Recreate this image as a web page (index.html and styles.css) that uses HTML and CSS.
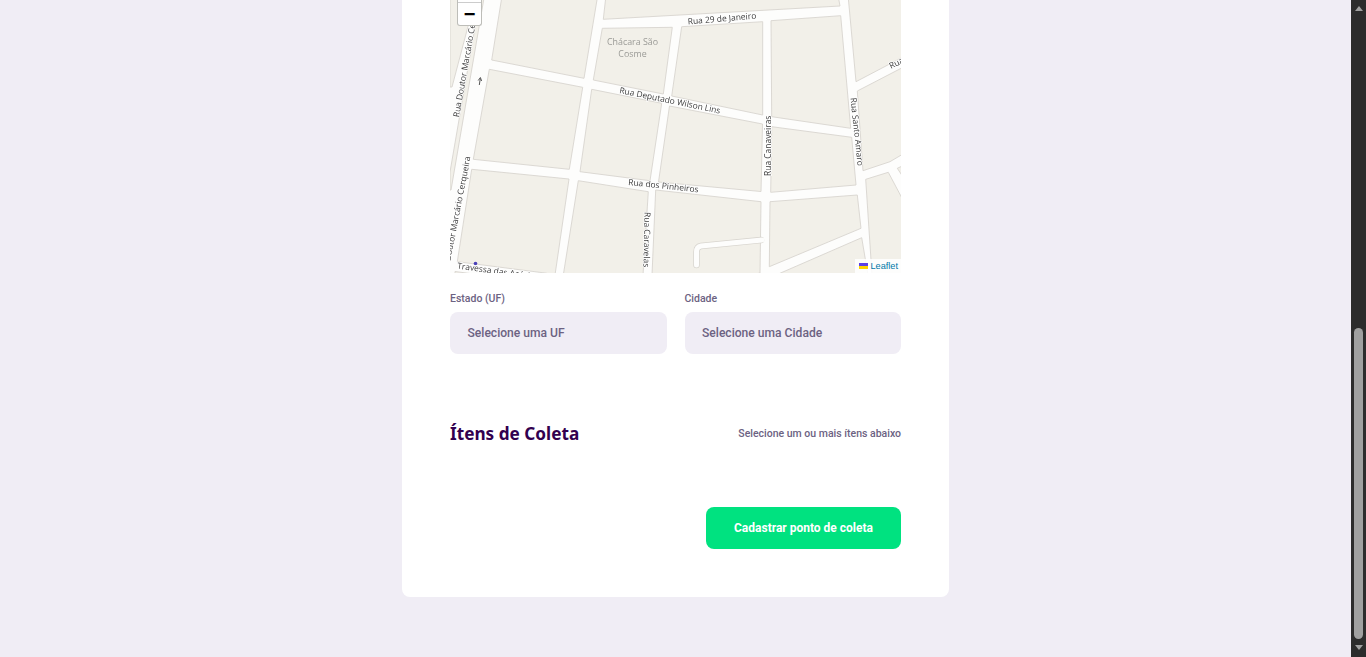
FILE: index.html
```html
<!DOCTYPE html>
<html lang="pt-BR">
<head>
<meta charset="utf-8">
<title>Cadastro do ponto de coleta</title>
<link rel="stylesheet" href="styles.css">
</head>
<body>
<div class="app">
  <main class="page">
    <form class="card">
      <div class="map">
        <svg class="map-canvas" viewBox="450 0 451 273" width="451" height="273">
          <g class="tiles">
            <polygon class="block" points="450,-2 475.5,-2 452,87 450,87"/>
            <polygon class="block" points="480,-2 484,-2 451,190 450,190 450,172"/>
            <polygon class="block" points="501.7,-2 491.7,60 584,78.3 597.3,-2"/>
            <polygon class="block" points="605.7,-2 603.3,19.3 840,6 838.5,-2"/>
            <polygon class="block" points="602.3,28.3 672.3,27.3 663.3,94 593.3,80"/>
            <polygon class="block" points="681.7,26.7 762.7,21.7 762.7,115 671.7,96"/>
            <polygon class="block" points="771,20.7 840.7,15.7 850.7,128.3 771.7,116.7"/>
            <polygon class="block" points="848.3,-2 856,81.7 903,57 903,-2"/>
            <polygon class="block" points="857.3,91 903,67.3 903,154 890,161.7 863,170.7"/>
            <polygon class="block" points="489.3,69.3 582.7,87.3 569.3,169.3 473.3,159.3"/>
            <polygon class="block" points="591.7,89.3 661.7,103.3 650,180.7 580,171.7"/>
            <polygon class="block" points="669.5,106 762.5,124 761,191.5 658.5,182"/>
            <polygon class="block" points="771.7,126.7 851.7,137.3 856,185 770.7,192.3"/>
            <polygon class="block" points="471.7,169.3 569,179 555,275 545,273 457.3,261.7"/>
            <polygon class="block" points="455,271.5 470,273.5 455,276"/>
            <polygon class="block" points="578.3,180.7 648.3,191.7 643,275 563.3,275"/>
            <polygon class="block" points="655.7,190 761,201.7 760,273 752,275 652,275"/>
            <polygon class="block" points="770,201.7 857.3,195 861,228.3 769.3,266.7"/>
            <polygon class="block" points="861.7,237.7 868,275 776,275"/>
            <polygon class="block" points="865.7,179.3 888.3,172.3 903,200 903,275 872,275"/>
            <polygon class="block" points="897.3,168.3 903,165.7 903,177"/>
            <path class="lane" d="M761,240 L701,246 Q696.5,246.8 696.5,252 L696.5,265"/>
            <path class="lane-fill" d="M762,240 L701,246 Q696.5,246.8 696.5,252 L696.5,265"/>
            <path class="oneway" d="M479.3,85 L480.3,78.5 M478.2,80.5 L480.4,77.5 L481.6,81"/>
            <circle class="poi" cx="475.5" cy="263.5" r="1.8"/>
            <text class="label poi-label" x="632.5" y="45" text-anchor="middle">Chácara São</text>
            <text class="label poi-label" x="632.5" y="57" text-anchor="middle">Cosme</text>
            <text class="label" transform="translate(688 24.5) rotate(-5)">Rua 29 de Janeiro</text>
            <text class="label" transform="translate(619 93) rotate(11.5)">Rua Deputado Wilson Lins</text>
            <text class="label" transform="translate(459 117.5) rotate(-80)">Rua Doutor Marcário Ce</text>
            <text class="label" text-anchor="end" transform="translate(470.5 157) rotate(-79)">Rua Doutor Marcário Cerqueira</text>
            <text class="label" transform="translate(457 268.5) rotate(8)">Travessa das Acácias</text>
            <text class="label" transform="translate(628 185) rotate(6)">Rua dos Pinheiros</text>
            <text class="label" transform="translate(644.5 212) rotate(91)">Rua Caravelas</text>
            <text class="label" transform="translate(771 176) rotate(-90)">Rua Canaveiras</text>
            <text class="label" transform="translate(850.5 98) rotate(84)">Rua Santo Amaro</text>
            <text class="label" transform="translate(891 69) rotate(-27)">Rua</text>
          </g>
        </svg>
        <div class="zoom">
          <span class="zoom-plus"></span>
          <span class="zoom-minus">−</span>
        </div>
        <div class="credit">
          <svg class="flag" viewBox="0 0 12 8" width="9" height="6"><rect width="12" height="4" fill="#5b40e8"/><rect y="4" width="12" height="4" fill="#ffd500"/></svg>
          <span class="credit-link">Leaflet</span>
        </div>
      </div>

      <div class="fields">
        <div class="field">
          <label class="field-label">Estado (UF)</label>
          <div class="select">Selecione uma UF</div>
        </div>
        <div class="field">
          <label class="field-label">Cidade</label>
          <div class="select">Selecione uma Cidade</div>
        </div>
      </div>

      <div class="legend">
        <h2 class="legend-title">Ítens de Coleta</h2>
        <span class="legend-hint">Selecione um ou mais ítens abaixo</span>
      </div>

      <div class="actions">
        <button class="submit" type="button">Cadastrar ponto de coleta</button>
      </div>
    </form>
  </main>
  <aside class="scrollbar">
    <span class="arrow arrow-up"></span>
    <span class="thumb"></span>
    <span class="arrow arrow-down"></span>
  </aside>
</div>
</body>
</html>
```
FILE: styles.css
```css
* { box-sizing: border-box; }
html, body { margin: 0; height: 100%; overflow: hidden; }
body { background: #f0edf5; font-family: Roboto, "Liberation Sans", sans-serif; color: #6c6282; }
.app { display: flex; height: 657px; }
.page { flex: 1; display: flex; justify-content: center; align-items: flex-start; min-width: 0; }
.card { width: 547px; height: 597px; padding: 0 48px; background: #fff; border-radius: 0 0 8px 8px; }

.map { position: relative; height: 273px; overflow: hidden; background: #fdfdfc; }
.map-canvas { display: block; }
.tiles { filter: blur(0.45px); }
.block { fill: #f2f0e9; stroke: #d8d5cf; stroke-width: 0.9; }
.lane { fill: none; stroke: #d8d5cf; stroke-width: 6.5; stroke-linecap: round; }
.lane-fill { fill: none; stroke: #fdfdfc; stroke-width: 5; stroke-linecap: round; }
.oneway { fill: none; stroke: #555; stroke-width: 1; }
.poi { fill: #4a40b8; }
.label { font-family: "Open Sans", "Noto Sans", sans-serif; font-size: 8.45px; fill: #3c3c3c; stroke: #fff; stroke-width: 1.5px; paint-order: stroke; }
.poi-label { fill: #9a9a96; stroke: none; font-size: 8.9px; }

.zoom { position: absolute; top: 0; left: 7px; width: 25px; display: flex; flex-direction: column; background: #fff; border: 1px solid #bdbdb8; border-top: 0; border-radius: 0 0 3px 3px; }
.zoom-plus { height: 3px; border-bottom: 1px solid #ccc; }
.zoom-minus { height: 22px; font: 700 20px/23px "Liberation Sans", sans-serif; color: #000; text-align: center; }

.credit { position: absolute; right: 0; bottom: 0; height: 14px; padding: 0 3px 0 4px; display: flex; align-items: center; gap: 2px; background: rgba(255,255,255,.85); font: 9.2px/14px "Liberation Sans", sans-serif; }
.flag { display: block; }
.credit-link { color: #0078a8; }

.fields { display: grid; grid-template-columns: 1fr 1fr; column-gap: 18px; margin-top: 20px; }
.field { display: flex; flex-direction: column; }
.field-label { font-size: 10.5px; line-height: 12px; font-weight: 500; margin-bottom: 7px; }
.select { height: 42px; padding: 0 17.5px; background: #f0edf5; border-radius: 8px; font-size: 12.1px; font-weight: 500; line-height: 42px; }

.legend { display: flex; justify-content: space-between; align-items: center; margin-top: 67px; height: 24px; }
.legend-title { margin: 0; padding-top: 1px; font-family: "Noto Sans", "Open Sans", sans-serif; font-size: 17.2px; line-height: 24px; font-weight: 700; color: #32004f; }
.legend-hint { font-size: 10.5px; font-weight: 500; }

.actions { display: flex; justify-content: flex-end; margin-top: 62px; }
.submit { width: 195px; height: 42px; border: 0; border-radius: 8px; background: #00e280; color: #fff; font-family: Roboto, sans-serif; font-size: 12px; font-weight: 700; padding: 0; }

.scrollbar { width: 15px; flex: none; position: relative; display: flex; flex-direction: column; align-items: center; background: #2c2c2c; }
.arrow { width: 0; height: 0; border-left: 4.5px solid transparent; border-right: 4.5px solid transparent; }
.arrow-up { margin-top: 6px; border-bottom: 5px solid #a0a0a0; }
.thumb { width: 9px; height: 311px; margin-top: auto; background: #a0a0a0; border-radius: 4.5px; }
.arrow-down { margin: 6px 0 7px; border-top: 5px solid #a0a0a0; }
```
